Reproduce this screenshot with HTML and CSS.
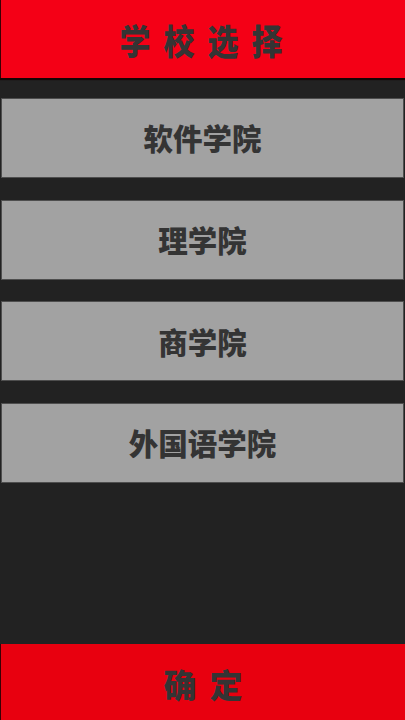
FILE: index.html
```html
<!DOCTYPE html>
<html lang="zh">
<head>
<meta charset="utf-8">
<title>学校选择</title>
<link rel="stylesheet" href="styles.css">
</head>
<body>
<div class="screen">
  <header class="top-bar"><span class="title">学校选择</span></header>
  <div class="list">
    <div class="item">软件学院</div>
    <div class="item">理学院</div>
    <div class="item">商学院</div>
    <div class="item">外国语学院</div>
  </div>
  <footer class="confirm"><span class="confirm-text">确定</span></footer>
</div>
</body>
</html>
```
FILE: styles.css
```css
html, body {
  margin: 0;
  padding: 0;
  background: #222222;
}
.screen {
  width: 405px;
  height: 720px;
  display: flex;
  flex-direction: column;
  font-family: "Noto Sans CJK SC", "Noto Sans", sans-serif;
  font-weight: 900;
  color: #343434;
}
.top-bar {
  height: 78px;
  flex: none;
  background: #f40016;
  border-left: 1px solid #3a0005;
  box-shadow: 0 2px 1px rgba(20, 0, 0, 0.85);
  display: flex;
  align-items: center;
  justify-content: center;
}
.title {
  display: inline-block;
  font-size: 31px;
  line-height: 1;
  letter-spacing: 13px;
  padding-left: 9px;
  transform: scaleY(1.14);
}
.list {
  padding-top: 20px;
  display: flex;
  flex-direction: column;
  gap: 21.7px;
}
.item {
  height: 78px;
  margin: 0 1px;
  background: #a2a2a2;
  border: 1px solid #4e4e4e;
  display: flex;
  align-items: center;
  justify-content: center;
  font-size: 29.5px;
  line-height: 1;
}
.confirm {
  margin-top: auto;
  height: 76px;
  flex: none;
  background: #e8000f;
  border-left: 1px solid #3a0005;
  display: flex;
  align-items: center;
  justify-content: center;
  padding-top: 5px;
  box-sizing: border-box;
}
.confirm-text {
  font-size: 33px;
  line-height: 1;
  letter-spacing: 13px;
  padding-left: 13px;
}
```
